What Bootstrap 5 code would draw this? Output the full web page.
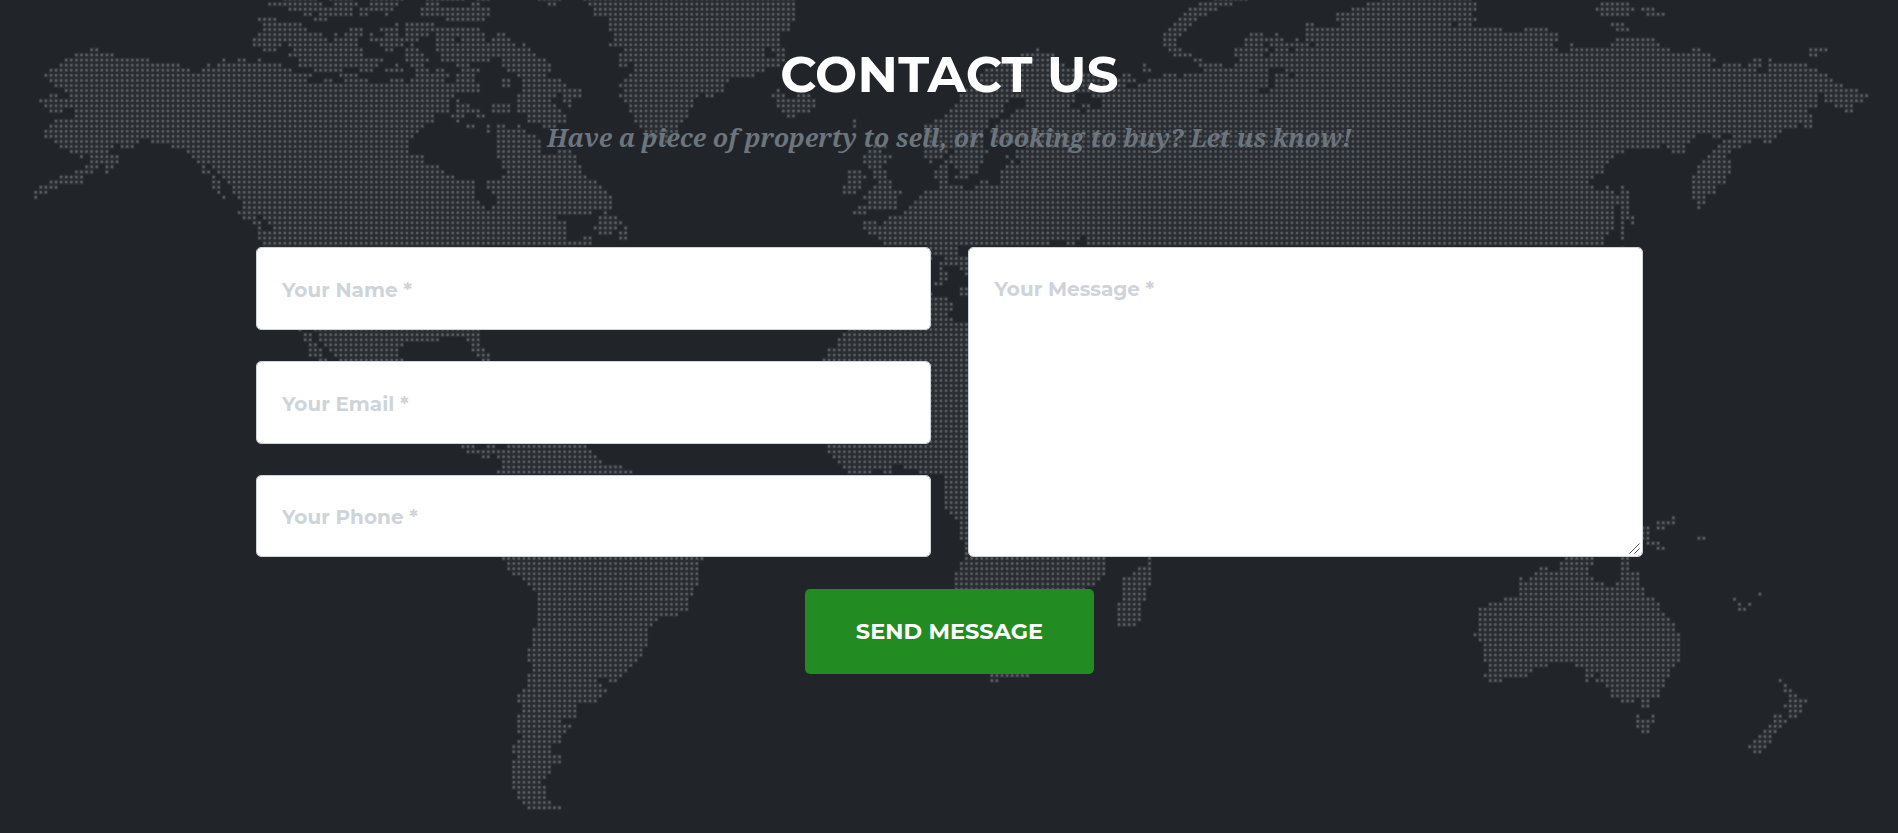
<!DOCTYPE html>
<html lang="en">
<head>
<meta charset="utf-8">
<meta name="viewport" content="width=device-width, initial-scale=1">
<title>Contact Us</title>
<link href="https://cdn.jsdelivr.net/npm/bootstrap@5.3.0/dist/css/bootstrap.min.css" rel="stylesheet">
<style>
  body { background: #212529; font-family: Montserrat, "Open Sans", sans-serif; overflow: hidden; }
  .contact-section { height: 833px; padding-top: 43px; background: #212529; overflow: hidden; }
  .world-map { position: absolute; left: 0; top: 0; width: 1898px; height: 833px; }
  .contact-inner { max-width: 1388px; padding: 0 0 0 1px; position: relative; }
  .contact-title { font-size: 50px; font-weight: 700; line-height: 63px; letter-spacing: .25px; margin: 0 0 13px; }
  .contact-lead { font-family: "Droid Serif", "Noto Serif", "DejaVu Serif", serif; font-size: 25px; font-style: italic; font-weight: 700; line-height: 37px; color: #6c757d; margin: 0 0 91px; }
  .form-grid { --bs-gutter-x: 37px; }
  .contact-field { height: 83px; padding: 26px 25px 24px; border: 1px solid #ced4da; border-radius: 5px; font-size: 20px; font-weight: 700; line-height: 30px; }
  .contact-field::placeholder { color: #ced4da; opacity: 1; }
  .field-stack { gap: 31px; height: 310px; }
  .field-stack .contact-field:last-child { height: 82px; }
  textarea.contact-field { height: 310px; display: block; resize: none; padding-left: 25.5px; }
  .resize-grip { position: absolute; right: 3px; bottom: 3px; width: 11px; height: 11px; }
  .btn-send { width: 289px; height: 85px; margin-top: 32px; padding: 5px 12px 7px; background: #228b22; border: 0; border-radius: 5px; color: #fff; font-size: 22.5px; font-weight: 700; line-height: 34px; }
  .btn-send:hover { background: #1c741c; color: #fff; }
</style>
</head>
<body>
<section class="contact-section position-relative">
  <svg class="world-map" viewBox="0 0 1898 833" fill="none" aria-hidden="true">
    <path class="map-dots" stroke="#fff" stroke-opacity=".045" stroke-width="5.086"/>
    <path class="map-dots" stroke="#fff" stroke-opacity=".08" stroke-width="3.7" stroke-linecap="round" stroke-dasharray="0 5.086"/>
    <path class="map-dots" stroke="#fff" stroke-opacity=".145" stroke-width="2.5" stroke-linecap="round" stroke-dasharray="0 5.086"/>
  </svg>
  <div class="container contact-inner">
    <div class="text-center">
      <h2 class="contact-title text-uppercase text-white">Contact Us</h2>
      <h3 class="contact-lead">Have a piece of property to sell, or looking to buy? Let us know!</h3>
    </div>
    <form>
      <div class="row form-grid">
        <div class="col-6">
          <div class="field-stack d-flex flex-column">
            <input class="form-control contact-field" type="text" placeholder="Your Name *">
            <input class="form-control contact-field" type="email" placeholder="Your Email *">
            <input class="form-control contact-field" type="tel" placeholder="Your Phone *">
          </div>
        </div>
        <div class="col-6">
          <div class="position-relative">
            <textarea class="form-control contact-field" placeholder="Your Message *"></textarea>
            <svg class="resize-grip" viewBox="0 0 11 11" stroke="#555" stroke-width="1" aria-hidden="true"><path d="M.5 10.5l10-10M5.5 10.5l5-5"/></svg>
          </div>
        </div>
      </div>
      <div class="text-center">
        <button class="btn btn-send text-uppercase" type="button">Send Message</button>
      </div>
    </form>
  </div>
</section>
<script src="https://cdn.jsdelivr.net/npm/bootstrap@5.3.0/dist/js/bootstrap.bundle.min.js"></script>
<script>
// Dotted world map. Each sheet lists, per dot row, the land runs as "from-to" in
// thirds of a pixel, relative to the sheet's left edge. Rows are separated by "/".
const PITCH = 15.258, X0 = 91.8, Y0 = 12.3;
const sheets = [
  { left: 0, row: -1, runs: `855-945 990-1060 1110-1200 1275-1390/808-960 1005-1070 1112-1190 1280-1312 1418-1440/870-1055 1082-1175 1265-1440/915-930 960-1055 1082-1098 1160 1265-1440/778-824 945-976 1342-1440/793-900 1190 1220-1297/793-915 1052-1083 1144-1190 1220-1297 1312-1440/778-961 1006 1037-1083 1113 1159-1190 1220-1282 1312-1440/763-976 1006-1068 1113-1251 1312-1365 1388-1440/763-839 870-1068 1144-1205 1236 1312-1440/274-290 793-824 885-1083 1159-1175 1220-1251 1312-1440/229-335 870-1083 1220-1266 1327-1440/198-442 671 717-732 778 900-1144 1220-1282 1327-1440/183-534 625 656-840 900-1129 1190 1236-1266 1373-1404/152-565 610-870 946-1022 1083-1113 1159-1205 1251-1282 1312-1327 1388-1434/137-930 1022-1068 1251-1343 1373-1419/152-915 976-991 1037-1098 1175-1205 1236-1327 1373-1419/168-1358 1373-1440/198-1434/152-168 213-1358/122-1343 1373/137-1343 1373-1404/152-183 229-1343 1373-1440/229-1297 1358-1388 1434/168-1297 1373/152-1266 1404-1419/137-1251/137-1236/168-412 457-1220/183-335 366-397 518-1220/213-320 564-1220/244 274-350 580-1266/274-350 595-1266/259-290 320-335 610 640-1312/229-274 320 610-625 656-1327/183-244 640 671-1358/152-244 640-656 686-1419/122-168 640-656 702-1419/107-137 656 702-1419/107 671 717-1419/732-1440/732-1440/717-1440/732-763 793-1440/763-778 808-1440/778 824-1440/778-1440/778-1440/793-1440/793-1440` },
  { left: 1440, row: -1, runs: `0-30 180-235 310-940/207-222 330-940/8-23 345-940/8-23 345-940/8 390-940/390-925/390-925/8 54-69 405-895/8 39-85 405-895/8-100 131 390-895/8-146 435-850 880-910/8-23 39-162 420-850 895-910/8-23 69-192 420-910/69-207 420-435 466-895/85-207 466-850/115-192 450-820/69-85 131-237 435-740/69-85 131-252 420-725/131-298 435-725 895/115-222 252-298 420-650 680-695 880 895-910 955-985/115-207 252-268 435-634 895-1000 1440/39-85 115-222 268 450-634 895-1000 1425-1440/39-85 115-237 450-619 910-985 1410-1440/8 146-252 466-619 925-940 1395-1440/146-252 466-604 1123 1364-1440/23 54-69 115 192-222 481-590 1123 1334-1440/23 54-131 496-590 1334-1440/54-162 510-575 1334-1440/54-177 545-560 1334-1440/54-177 1185-1215 1334-1440/54-177 237-268 1169-1200 1334-1395 1425-1440/54-283 1154-1230 1334-1380 1410-1440/69-283 1154-1215 1350 1395-1440/69-298 1169-1200 1380-1395 1425-1440/85-298 1108-1139 1185-1215 1364-1395 1440/69-313 1108-1154 1185-1215 1364-1395 1425-1440/23-344 1108-1139 1200-1230 1380-1395/23-359 1093-1139 1185-1230 1380-1440/39-374 1093-1123 1169-1261 1334-1440/54-390 1154-1245 1319-1440/54-390 1169-1245 1303-1440/8 39-390 1139-1245 1288-1440/8-329 374 1123-1154 1273-1440/8-222 359-405 1227-1440/8-252 359-420 1154-1185 1212-1440/8-252 344-405 435 1154-1440/8-252 359-390 420-435 1169-1440/8-252 313-329 420-435 1200-1440/8-329 1212-1440` },
  { left: 2880, row: -1, runs: `765-860 1265-1440/720-812 1225-1440/690-766 1179-1440/675-736 1133-1440/660-705 1133-1440/644-690 1042-1057 1148-1440/629-675 1042-1440/614-660 873-904 950 1042-1440/614-644 858-920 934-965 1011 1042-1440/614-644 858-904 934-1042 1072-1440/232 629-660 828-920 950-980 1011-1440/186-278 644-690 828-904 934-1440/170-278 705-720 843-920 934-1440/110-310 553 720-782 828-920 934-1440/80-340 553-568 736-920 980-1440/65-400 492-507 614-644 675-920 950-980 1011-1440/50-430 477-522 568-920 950-1440/35-490 538-920 950-1440/20-890 934-1440/4-340 400-1440/0-140 200-340 430-1440/0-125 200-325 370-385 430-1440/0-125 170-355 385-1440/0-110 155-1440/0-80 125-1440/0-80 110-1440/0-65 95-1440/0-65 110-1440/0-65 110-1440/0-65 200-1440/0-80 170-1440/0-65 140 170-1440/0-65 155 186-1440/0-50 140-1440/0-50 125-1440/0-20 125-1440/65-80 125-1440/50-1440/0-1440/0-1440/0-1440/0-1440/0-1440/0-1440/0-1440/0-1440/0-1440/0-355 385-1440/0-265 325-340 385-1440` },
  { left: 4254, row: -1, runs: `0-155/0-170 552-628/0-170 537-643 675-705/0-155 552-628 690-735/0-124 140-170/0-95 125-155 582-613/0-247 323-384 598-628/0-414/0-414 598-704/0-400 460 582-720/0-414 460-750 826-842 1178-1224/0-872 1178-1193/0-888 1010-1025 1056/0-872 918-964 995-1025 1056-1163/0-1010 1056-1193/0-1224/0-1239/0-1270/0-1315/0-1193 1224-1346/0-1193 1224-1331/0-1193 1254-1300/0-1163 1285-1300/0-1178/0-1178/0-1132 1163-1178/0-1086/0-826 888-903 949-1071/0-811 918-995 1040-1056/0-720 750-796 903-964/0-613 765-796 888-933/0-582 872-918/0-567 857-933/0-552 842-933/0-552 842-933/0-521 826-918/0-506 826-918/0-521 567 613 826-888/0-582 613-628 826-888/0-628 826-857/0-628 842-857/0-582 613-628 842/0-582 613-628/0-582 613-643/0-582 613 643/0-582 613/0-567 613/0-552 613/0-552/613` },
  { left: 720, row: 64, runs: `180 225-720/195-210 240-715/195-210 240-595 685-715/210-225 255-485 700-715/210-240 270-475 700-730/210-240 285-475 715-745/240-255 300-485 730-745` },
  { left: 720, row: 87, runs: `668-700 745-760 805-1035/684-1050/730-745 775-1065/790-1080/790-1145/775-1175` },
  { left: 2340, row: 48, runs: `455-530/455-530/455 497-565/482-565/482 543-560/482-497 558/482-497/467-482/543-558/455 543-558/455-500/455-515/455-515/455-500/455-515/455-560/205-560/190-560/175-560/175-560/145-560/145-560/130-560/455-560/455-560/455-560/455-560/455-560/455-560/455-560/455-560/455-560/455-560/455-560/455-560/455-560/455-560/455-560/455-560/145-560/145-560/160-560/175-560/190-330 375-560/205-270 312-330 420-560/497-560/497-560/497-560/497-560/497-560/497-560/497-560/512-560/527-560/543-560/543-560/543-560/543-560/558/558/558/558/543-558/543-558/527-558/527-558` },
  { left: 2820, row: 109, runs: `85-490 628/62-490 628/62-490 597-628/47-490 582-628/47-475 551-628/47-460 551-628/47-430 551-612/551-612/551-612/536-597/536-597/536-597/536-597/536-582` },
  { left: 2820, row: 132, runs: `155-262/155-170` },
  { left: 1440, row: 109, runs: `69-665/85-650/85-650/100-650/131-650/146-650/162-635/177-635/177-620/177-620/177-620/177-590/177-528/177-513/162-498/162-498/162-498/162-498/146-483/146-483/146-467/162-452/162-437/146-422/146-345 391-406/146-360/131-375/115-360/115-345/131-285/131-285/115-285/115-240/115-268/115-253/131-240/115-240/100-207/100-207/115-240/100-240/100-207/100-207/100-192/100-177/100-192/115-192/115-192/131-207/146-240` },
  { left: 4254, row: 101, runs: `765/720-765/675-690 720-735/675-690/675-690 842-857/690-720/720-735/0/445-521 613-628/430-521 613-628/369-384 430-506 613-628/354-506 613-659/308 338-521 613-659/308-552 598-659/308-674/308-674 1025/262-705 949/216-720 964 995/186-720 964-980/186-735/186-750/186-765/186-765/170-781/186-781/201-781/201-781/201-781/201-781/216-384 476-765/216-338 506-750/201-323 506-521 552-750/216-247 506 537-735 1086/567-735 1102/582-720 1102-1117/582-720 1117-1132/613-643 674-690 1117-1163/674-690 1102-1147/1117-1147/659 705 1071-1086 1117-1132/659-705 1071-1102/659-690 1056-1086/674-690 1040-1071/1025-1056/1010-1056/995-1040/1010-1025` }
];
// Collect the covered cells per row, then merge them so that sheets never overlap.
const rows = new Map();
for (const s of sheets) {
  s.runs.split("/").forEach((line, i) => {
    const r = s.row + i;
    if (!rows.has(r)) rows.set(r, new Set());
    for (const run of line.split(" ")) {
      const [a, b = a] = run.split("-").map(Number);
      const c1 = Math.ceil((a + s.left - X0) / PITCH - 0.45);
      const c2 = Math.max(c1, Math.floor((b + s.left - X0) / PITCH + 0.45));
      for (let c = c1; c <= c2; c++) rows.get(r).add(c);
    }
  });
}
let solid = "", dots = "";
for (const [r, set] of rows) {
  const y = ((Y0 + r * PITCH) / 3).toFixed(2);
  for (const c of set) {
    if (set.has(c - 1)) continue;
    let e = c;
    while (set.has(e + 1)) e++;
    const x1 = (X0 + c * PITCH) / 3, x2 = (X0 + e * PITCH) / 3;
    solid += `M${(x1 - 2.2).toFixed(2)} ${y}H${(x2 + 2.2).toFixed(2)}`;
    dots += `M${x1.toFixed(2)} ${y}H${(x2 + 0.1).toFixed(2)}`;
  }
}
document.querySelectorAll(".map-dots").forEach((p, i) => p.setAttribute("d", i ? dots : solid));
</script>
</body>
</html>
